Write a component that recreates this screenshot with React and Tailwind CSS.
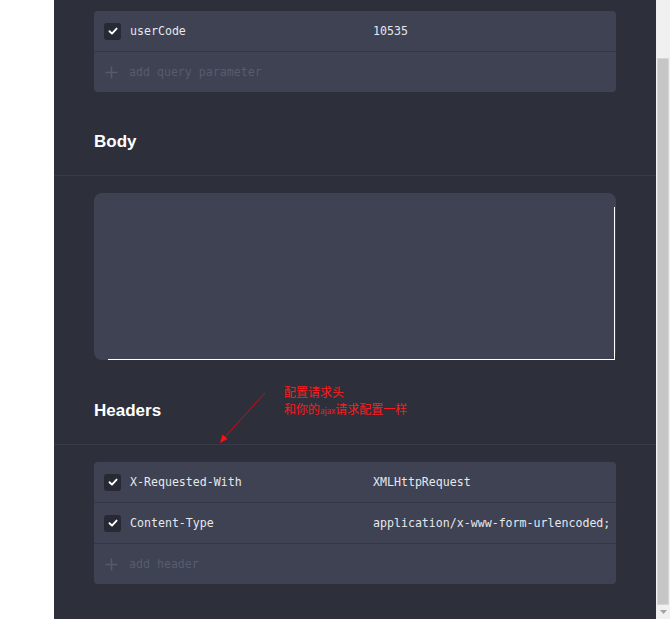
import React from 'react';

const mono = { fontFamily: '"DejaVu Sans Mono", "Liberation Mono", monospace' };

const Check = () => (
  <span className="w-[17px] h-[17px] rounded-[3px] bg-[#272934] flex items-center justify-center shrink-0">
    <svg width="10" height="10" viewBox="0 0 10 10">
      <path d="M1.5 5.2 L4 7.6 L8.6 2.6" fill="none" stroke="#ffffff" strokeWidth="1.9" strokeLinecap="round" strokeLinejoin="round" />
    </svg>
  </span>
);

const Plus = () => (
  <svg width="13" height="13" viewBox="0 0 13 13" className="shrink-0">
    <path d="M6.5 0.5 V12.5 M0.5 6.5 H12.5" stroke="#555a6c" strokeWidth="1.6" />
  </svg>
);

const ParamRow = ({ name, value }) => (
  <div className="h-[40px] bg-[#3e4252] flex items-center pl-[10px] text-[11.6px] text-[#e6e8ee]" style={mono}>
    <Check />
    <span className="ml-[9px] w-[243px] pt-[2px]">{name}</span>
    <span className="whitespace-nowrap pt-[2px]">{value}</span>
  </div>
);

const AddRow = ({ label }) => (
  <div className="h-[40px] bg-[#3e4252] flex items-center pl-[11px] text-[11.6px] text-[#575c70]" style={mono}>
    <Plus />
    <span className="ml-[11px] pt-[2px]">{label}</span>
  </div>
);

const Heading = ({ children }) => (
  <h2 className="px-10 text-[17px] font-bold text-white leading-[20px]" style={{ fontFamily: '"Liberation Sans", Arial, sans-serif' }}>
    {children}
  </h2>
);

export default function App() {
  return (
    <div className="flex w-[670px] h-[619px] overflow-hidden bg-white">
      <div className="w-[54px] shrink-0 bg-white" />

      <div className="relative w-[602px] shrink-0 bg-[#2d2f3a] pt-[11px]">
        {/* Query params */}
        <div className="px-10">
          <div className="rounded-[4px] overflow-hidden flex flex-col gap-px bg-[#343744]">
            <ParamRow name="userCode" value="10535" />
            <AddRow label="add query parameter" />
          </div>
        </div>

        {/* Body */}
        <div className="mt-[40px]">
          <Heading>Body</Heading>
        </div>
        <div className="mt-[23px] h-px bg-[#393c48]" />
        <div className="px-10 mt-[17px]">
          <div className="relative h-[167px] rounded-[8px] bg-[#3e4252]">
            <div className="absolute left-[14px] top-[14px] right-px bottom-0 border-r border-b border-white" />
          </div>
        </div>

        {/* Headers */}
        <div className="mt-[41px]">
          <Heading>Headers</Heading>
        </div>
        <div className="mt-[23px] h-px bg-[#393c48]" />
        <div className="px-10 mt-[17px]">
          <div className="rounded-[4px] overflow-hidden flex flex-col gap-px bg-[#343744]">
            <ParamRow name="X-Requested-With" value="XMLHttpRequest" />
            <ParamRow name="Content-Type" value="application/x-www-form-urlencoded;" />
            <AddRow label="add header" />
          </div>
        </div>

        {/* annotation */}
        <div
          className="absolute left-[230px] top-[383px] text-[12px] leading-[17px] text-[#ff1a1a]"
          style={{ fontFamily: '"Noto Sans CJK SC", "Liberation Sans", sans-serif' }}
        >
          <div>配置请求头</div>
          <div>
            和你的<span className="text-[8px]">ajax</span>请求配置一样
          </div>
        </div>
        <svg className="absolute left-[160px] top-[390px]" width="56" height="58" viewBox="0 0 56 58">
          <line x1="51" y1="3" x2="10" y2="48" stroke="#c8101a" strokeWidth="1" />
          <path d="M6 53 L8.5 44.5 L13.5 49 Z" fill="#ff1010" />
        </svg>
      </div>

      {/* scrollbar */}
      <div className="w-[14px] shrink-0 bg-[#f0f0f0] flex flex-col">
        <div className="h-[58px]" />
        <div className="mx-px flex-1 bg-[#c6c6c6] border border-[#d6d6d6]" />
        <div className="h-[14px] flex items-center justify-center">
          <svg width="7" height="4" viewBox="0 0 7 4">
            <path d="M0 0 H7 L3.5 4 Z" fill="#a3a3a3" />
          </svg>
        </div>
      </div>
    </div>
  );
}
